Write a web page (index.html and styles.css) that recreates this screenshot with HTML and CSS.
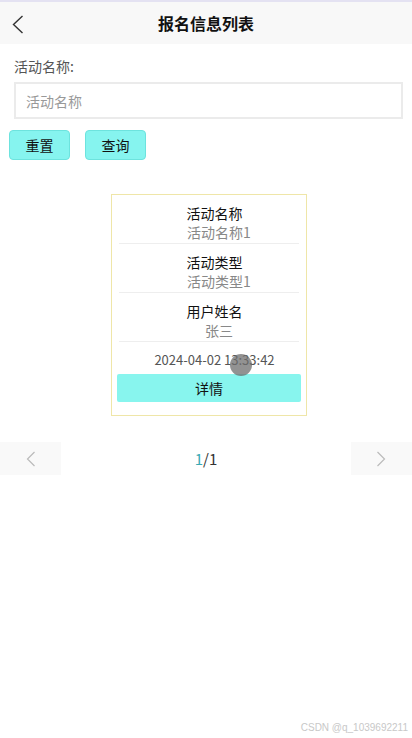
FILE: index.html
```html
<!DOCTYPE html>
<html lang="zh">
<head>
<meta charset="utf-8">
<link rel="stylesheet" href="styles.css">
</head>
<body>
<div class="page">
  <div class="topline"></div>
  <header class="navbar">
    <span class="back"><svg width="12" height="19" viewBox="0 0 12 19"><path d="M10.5 1 L1.5 9.5 L10.5 18" fill="none" stroke="#333" stroke-width="1.4"/></svg></span>
    <h1 class="title">报名信息列表</h1>
  </header>
  <section class="search">
    <div class="label">活动名称:</div>
    <div class="input">活动名称</div>
    <div class="btns">
      <button class="btn">重置</button>
      <button class="btn">查询</button>
    </div>
  </section>
  <section class="list">
    <div class="card">
      <div class="row"><div class="k">活动名称</div><div class="v">活动名称1</div></div>
      <div class="row"><div class="k">活动类型</div><div class="v">活动类型1</div></div>
      <div class="row"><div class="k">用户姓名</div><div class="v">张三</div></div>
      <div class="date">2024-04-02 13:33:42</div>
      <div class="detail">详情</div>
      <span class="touch"></span>
    </div>
  </section>
  <nav class="pager">
    <span class="pbtn"><svg width="10" height="16" viewBox="0 0 10 16"><path d="M8.5 1 L1.5 8 L8.5 15" fill="none" stroke="#bbb" stroke-width="1.2"/></svg></span>
    <span class="pnum"><em>1</em>/1</span>
    <span class="pbtn"><svg width="10" height="16" viewBox="0 0 10 16"><path d="M1.5 1 L8.5 8 L1.5 15" fill="none" stroke="#bbb" stroke-width="1.2"/></svg></span>
  </nav>
  <div class="watermark">CSDN @q_1039692211</div>
</div>
</body>
</html>
```
FILE: styles.css
```css
* { box-sizing: border-box; }
html, body { margin: 0; padding: 0; }
body {
  font-family: "Noto Sans CJK SC", "Noto Sans", sans-serif;
  background: #fff;
  color: #000;
}
.page {
  width: 412px;
  height: 738px;
  position: relative;
  overflow: hidden;
}
.topline { height: 2px; background: #e4e2f2; }
.navbar {
  height: 42px;
  background: #f8f8f8;
  display: flex;
  align-items: center;
  justify-content: center;
  position: relative;
}
.back {
  position: absolute;
  left: 12px;
  top: 13px;
  display: flex;
}
.title {
  margin: 0;
  font-size: 16px;
  font-weight: 700;
  color: #111;
  line-height: 1;
}
.search { padding: 0 9px 0 14px; }
.label {
  margin-top: 14px;
  font-size: 14px;
  color: #555;
  line-height: 16px;
}
.input {
  margin-top: 8px;
  height: 37px;
  border: 2px solid #ebebeb;
  padding-left: 10px;
  font-size: 14px;
  color: #999;
  display: flex;
  align-items: center;
}
.btns {
  display: flex;
  gap: 15px;
  margin-top: 11px;
  margin-left: -5px;
}
.btn {
  width: 61px;
  height: 30px;
  background: #86f4ef;
  border: 1px solid #6de3de;
  border-radius: 4px;
  font-family: inherit;
  font-size: 14px;
  color: #111;
  padding: 0;
}
.list { padding-top: 34px; }
.card {
  margin-left: 111px;
  width: 196px;
  height: 222px;
  border: 1px solid #efe6a8;
  padding: 0 5px;
  position: relative;
}
.row {
  margin: 0 2px;
  border-bottom: 1px solid #eeeeee;
  height: 49px;
  display: flex;
  flex-direction: column;
  align-items: center;
  padding-top: 8px;
}
.k { font-size: 14px; color: #111; line-height: 20px; margin-left: 11px; }
.v { font-size: 14px; color: #888; line-height: 18px; margin-left: 20px; }
.date {
  text-align: center;
  font-size: 13px;
  color: #555;
  line-height: 18px;
  margin-top: 9px;
  margin-left: 11px;
}
.detail {
  margin-top: 5px;
  height: 28px;
  background: #88f5ee;
  border-radius: 2px;
  font-size: 14px;
  color: #111;
  display: flex;
  align-items: center;
  justify-content: center;
}
.touch {
  position: absolute;
  left: 118px;
  top: 159px;
  width: 22px;
  height: 22px;
  border-radius: 50%;
  background: rgba(110,110,110,0.75);
}
.pager {
  margin-top: 26px;
  height: 33px;
  display: flex;
  justify-content: space-between;
  align-items: center;
}
.pbtn {
  width: 61px;
  height: 33px;
  background: #f9f9f9;
  display: flex;
  align-items: center;
  justify-content: center;
}
.pnum { font-size: 15px; color: #333; }
.pnum em { font-style: normal; color: #3aa9b3; }
.watermark {
  position: absolute;
  right: 4px;
  bottom: 5px;
  font-family: "Liberation Sans", sans-serif;
  font-size: 10px;
  color: #c8c8c8;
}
```
